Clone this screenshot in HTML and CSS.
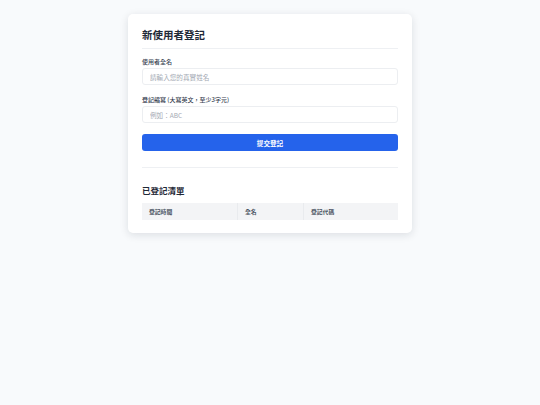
FILE: index.html
```html
<!DOCTYPE html>
<html lang="zh-Hant">
<head>
    <meta charset="UTF-8">
    <title>新使用者登記</title>
    <link rel="stylesheet" href="styles.css">
</head>
<body>
    <div class="card">
        <h1>新使用者登記</h1>
        <form class="form">
            <div class="field">
                <label for="fullName">使用者全名</label>
                <input id="fullName" type="text" placeholder="請輸入您的真實姓名">
            </div>
            <div class="field">
                <label for="code">登記縮寫 (大寫英文，至少3字元)</label>
                <input id="code" type="text" placeholder="例如：ABC">
            </div>
            <button type="button" class="submit">提交登記</button>
        </form>
        <div class="list">
            <h2>已登記清單</h2>
            <table>
                <thead>
                    <tr>
                        <th class="col-time">登記時間</th>
                        <th class="col-name">全名</th>
                        <th>登記代碼</th>
                    </tr>
                </thead>
                <tbody></tbody>
            </table>
        </div>
    </div>
</body>
</html>
```
FILE: styles.css
```css
body {
    margin: 0;
    padding: 14px 0;
    background: #f8fafc;
    font-family: "Noto Sans CJK TC", "Noto Sans", sans-serif;
    color: #1f2937;
}

.card {
    width: 256px;
    margin: 0 auto;
    padding: 14px 14px 13px;
    background: #fff;
    border-radius: 5px;
    box-shadow: 0 2px 8px rgba(15, 23, 42, 0.12);
}

h1 {
    margin: 0;
    padding-bottom: 6px;
    font-size: 10.5px;
    line-height: 14px;
    font-weight: 700;
    border-bottom: 1px solid #eef0f3;
}

.form {
    padding: 9px 0 16px;
    border-bottom: 1px solid #eef0f3;
}

.field {
    margin-bottom: 11px;
}

.field label {
    display: block;
    font-size: 6px;
    line-height: 8px;
    font-weight: 500;
    color: #374151;
    margin-bottom: 2px;
}

.field input {
    display: block;
    box-sizing: border-box;
    width: 100%;
    height: 17px;
    padding: 0 7px;
    border: 1px solid #eceef1;
    border-radius: 3px;
    font-family: inherit;
    font-size: 6.6px;
    color: #111827;
}

.field input::placeholder {
    color: #a3a9b3;
}

.submit {
    display: block;
    width: 100%;
    height: 17px;
    border: 0;
    border-radius: 3px;
    background: #2563eb;
    color: #fff;
    font-family: inherit;
    font-size: 6.6px;
    font-weight: 700;
}

.list h2 {
    margin: 16px 0 7px;
    font-size: 8.5px;
    line-height: 12px;
    font-weight: 700;
}

table {
    width: 100%;
    border-collapse: collapse;
}

th {
    height: 17px;
    padding: 0 7px;
    background: #f3f4f6;
    text-align: left;
    font-size: 5.8px;
    font-weight: 700;
    color: #4b5563;
    border-left: 1px solid #e9ebee;
}

th:first-child {
    border-left: 0;
}

.col-time {
    width: 81px;
}

.col-name {
    width: 51px;
}
```
